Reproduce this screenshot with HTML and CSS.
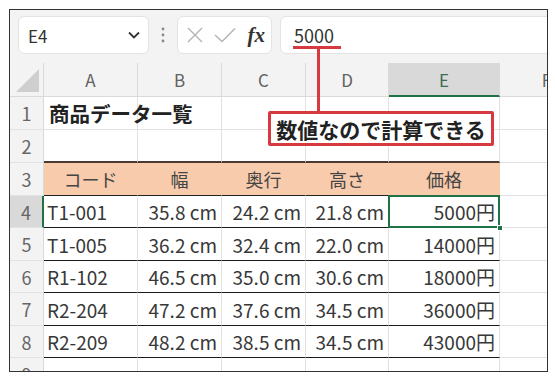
FILE: index.html
```html
<!DOCTYPE html>
<html lang="ja">

<head>
  <meta charset="UTF-8">
  <title>商品データ一覧</title>
  <meta name="viewport" content="width=device-width, initial-scale=1">
  <link rel="stylesheet" href="styles.css">
</head>

<body>
  <div class="sheet">
    <div class="toolbar">
      <div class="namebox">
        <span>E4</span>
        <svg width="12" height="8" viewBox="0 0 12 8"><polyline points="1,1.5 6,6.5 11,1.5" fill="none" stroke="#333" stroke-width="1.8"/></svg>
      </div>
      <div class="grip">
        <svg width="4" height="16" viewBox="0 0 4 16"><circle cx="2" cy="2" r="1.4" fill="#888"/><circle cx="2" cy="8" r="1.4" fill="#888"/><circle cx="2" cy="14" r="1.4" fill="#888"/></svg>
      </div>
      <div class="fxbtns">
        <svg width="16" height="16" viewBox="0 0 16 16"><path d="M1 1 L15 15 M15 1 L1 15" stroke="#b3b3b3" stroke-width="1.4" fill="none"/></svg>
        <svg width="22" height="16" viewBox="0 0 22 16"><polyline points="1,8 8,14.5 21,1.5" stroke="#b3b3b3" stroke-width="1.4" fill="none"/></svg>
        <span class="fx">fx</span>
      </div>
      <div class="formula">5000</div>
    </div>

    <div class="grid">
      <div class="corner"><span></span></div>
      <div class="hd">A</div>
      <div class="hd">B</div>
      <div class="hd">C</div>
      <div class="hd">D</div>
      <div class="hd on">E</div>
      <div class="hd">F</div>

      <div class="rh">1</div>
      <div class="c title">商品データ一覧</div>
      <div class="c"></div>
      <div class="c"></div>
      <div class="c"></div>
      <div class="c"></div>
      <div class="c"></div>

      <div class="rh">2</div>
      <div class="c top"></div>
      <div class="c top"></div>
      <div class="c top"></div>
      <div class="c top"></div>
      <div class="c top"></div>
      <div class="c"></div>

      <div class="rh">3</div>
      <div class="c th">コード</div>
      <div class="c th">幅</div>
      <div class="c th">奥行</div>
      <div class="c th">高さ</div>
      <div class="c th">価格</div>
      <div class="c"></div>

      <div class="rh on">4</div>
      <div class="c tb">T1-001</div>
      <div class="c tb num">35.8 cm</div>
      <div class="c tb num">24.2 cm</div>
      <div class="c tb num">21.8 cm</div>
      <div class="c tb num sel">5000円<i class="handle"></i></div>
      <div class="c"></div>

      <div class="rh">5</div>
      <div class="c tb">T1-005</div>
      <div class="c tb num">36.2 cm</div>
      <div class="c tb num">32.4 cm</div>
      <div class="c tb num">22.0 cm</div>
      <div class="c tb num">14000円</div>
      <div class="c"></div>

      <div class="rh">6</div>
      <div class="c tb">R1-102</div>
      <div class="c tb num">46.5 cm</div>
      <div class="c tb num">35.0 cm</div>
      <div class="c tb num">30.6 cm</div>
      <div class="c tb num">18000円</div>
      <div class="c"></div>

      <div class="rh">7</div>
      <div class="c tb">R2-204</div>
      <div class="c tb num">47.2 cm</div>
      <div class="c tb num">37.6 cm</div>
      <div class="c tb num">34.5 cm</div>
      <div class="c tb num">36000円</div>
      <div class="c"></div>

      <div class="rh">8</div>
      <div class="c tb">R2-209</div>
      <div class="c tb num">48.2 cm</div>
      <div class="c tb num">38.5 cm</div>
      <div class="c tb num">34.5 cm</div>
      <div class="c tb num">43000円</div>
      <div class="c"></div>

      <div class="rh">9</div>
      <div class="c"></div>
      <div class="c"></div>
      <div class="c"></div>
      <div class="c"></div>
      <div class="c"></div>
      <div class="c"></div>
    </div>

    <!-- callout -->
    <div class="mark-line"></div>
    <div class="mark-stem"></div>
    <div class="callout">数値なので計算できる</div>
  </div>
</body>

</html>
```

FILE: styles.css
```css
* {
  box-sizing: border-box;
}

body {
  margin: 0;
  padding: 9px;
  background: white;
  font-family: "Noto Sans CJK JP", "Noto Sans", sans-serif;
  color: #333;
}

.sheet {
  position: relative;
  width: 539px;
  height: 363px;
  border: 1px solid #333;
  overflow: hidden;
  background: white;
}

/* formula bar */
.toolbar {
  display: flex;
  align-items: center;
  height: 53px;
  padding: 0 0 3px 8px;
  background: #f3f3f3;
  overflow: hidden;
}

.toolbar > div {
  flex-shrink: 0;
}

.namebox,
.fxbtns,
.formula {
  height: 38px;
  background: white;
  border: 1px solid #e3e3e3;
  border-radius: 6px;
  display: flex;
  align-items: center;
}

.namebox {
  width: 131px;
  justify-content: space-between;
  padding: 0 8px 0 9px;
  font-size: 17px;
  color: #333;
}

.grip {
  width: 28px;
  display: flex;
  justify-content: center;
}

.fxbtns {
  width: 95px;
  padding: 0 6px 0 9px;
  justify-content: space-between;
}

.fx {
  font-family: "Liberation Serif", serif;
  font-style: italic;
  font-weight: bold;
  font-size: 21px;
  color: #333;
  line-height: 1;
}

.formula {
  width: 300px;
  margin-left: 8px;
  padding-left: 13px;
  font-size: 18px;
  color: #333;
}

/* cells */
.grid {
  display: grid;
  grid-template-columns: 34px 94px 84px 84px 83px 111px 94px;
  grid-template-rows: 34px 33px 33px 33px 32px 33px 32px 33px 32px 33px;
  font-size: 19px;
}

.corner {
  background: #f3f3f3;
  border-right: 1px solid #dadada;
  border-bottom: 1px solid #dadada;
  position: relative;
}

.corner span {
  position: absolute;
  right: 4px;
  bottom: 4px;
  width: 23px;
  height: 23px;
  background: #cfcfcf;
  clip-path: polygon(100% 0, 100% 100%, 0 100%);
}

.hd {
  background: #f3f3f3;
  border-right: 1px solid #dadada;
  border-bottom: 1px solid #dadada;
  display: flex;
  align-items: center;
  justify-content: center;
  color: #616161;
  font-size: 17px;
}

.hd.on {
  background: #d9d9d9;
  border-bottom: 2px solid #1f7244;
  color: #3d6b50;
}

.rh {
  background: #f3f3f3;
  border-right: 1px solid #dadada;
  border-bottom: 1px solid #e2e2e2;
  display: flex;
  align-items: center;
  justify-content: center;
  color: #666;
  font-size: 18px;
}

.rh.on {
  background: #d9d9d9;
  border-right: 2px solid #1f7244;
}

.c {
  position: relative;
  border-right: 1px solid #e1e1e1;
  border-bottom: 1px solid #e1e1e1;
  display: flex;
  align-items: center;
  padding: 0 3px;
  white-space: nowrap;
  color: #383838;
}

.title {
  font-weight: bold;
  font-size: 20.5px;
  color: #222;
  padding-left: 5px;
  z-index: 1;
}

.top {
  border-bottom: 2px solid #4b3a30;
}

.th {
  background: #f8cbad;
  border-right-color: #f8cbad;
  border-bottom-color: #222;
  justify-content: center;
  color: #444;
  font-size: 18px;
}

.tb {
  border-bottom-color: #1a1a1a;
}

.num {
  justify-content: flex-end;
  padding-right: 4px;
}

.sel::after {
  content: "";
  position: absolute;
  left: -1px;
  top: -1px;
  right: -1px;
  bottom: -1px;
  border: 2px solid #1f7244;
}

.handle {
  position: absolute;
  right: -4px;
  bottom: -4px;
  width: 6px;
  height: 6px;
  background: #1f7244;
  border: 1px solid white;
  z-index: 2;
}

/* callout */
.mark-line {
  position: absolute;
  left: 283px;
  top: 36px;
  width: 48px;
  height: 3px;
  background: #d63a40;
}

.mark-stem {
  position: absolute;
  left: 307px;
  top: 36px;
  width: 3px;
  height: 66px;
  background: #d63a40;
}

.callout {
  position: absolute;
  left: 258px;
  top: 101px;
  width: 226px;
  height: 35px;
  border: 3px solid #d63a40;
  border-radius: 2px;
  background: white;
  display: flex;
  align-items: center;
  justify-content: center;
  font-size: 21px;
  font-weight: bold;
  color: #222;
  white-space: nowrap;
}
```
